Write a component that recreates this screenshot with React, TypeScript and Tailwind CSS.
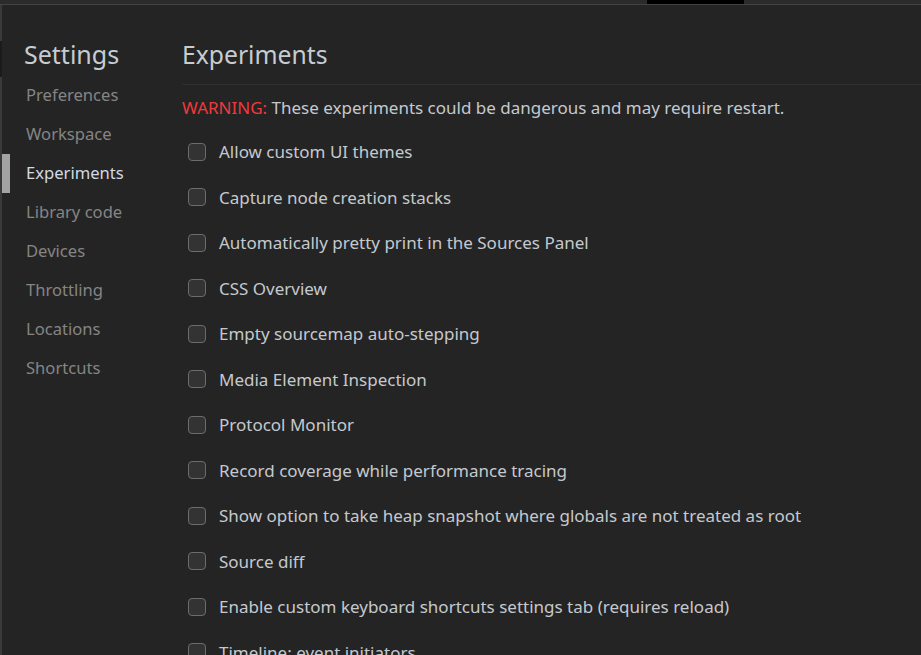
import React from 'react';

const navItems = [
  'Preferences',
  'Workspace',
  'Experiments',
  'Library code',
  'Devices',
  'Throttling',
  'Locations',
  'Shortcuts',
];

const experiments = [
  'Allow custom UI themes',
  'Capture node creation stacks',
  'Automatically pretty print in the Sources Panel',
  'CSS Overview',
  'Empty sourcemap auto-stepping',
  'Media Element Inspection',
  'Protocol Monitor',
  'Record coverage while performance tracing',
  'Show option to take heap snapshot where globals are not treated as root',
  'Source diff',
  'Enable custom keyboard shortcuts settings tab (requires reload)',
  'Timeline: event initiators',
];

export default function App() {
  const active = 'Experiments';

  return (
    <div
      className="h-[655px] w-[921px] overflow-hidden bg-[#242424] flex flex-col"
      style={{ fontFamily: '"Noto Sans", "Open Sans", sans-serif' }}
    >
      {/* strip of the window behind */}
      <div className="h-[4px] flex bg-[#2b2b2d] shrink-0">
        <div className="w-[647px]" />
        <div className="w-[97px] bg-black" />
      </div>
      <div className="h-px bg-[#434343] shrink-0" />

      <div className="flex flex-1 min-h-0">
        {/* left edge of the page behind */}
        <div className="w-[2px] flex flex-col shrink-0">
          <div className="h-[36px] bg-[#3a3a3a]" />
          <div className="h-[36px] bg-[#1b1b1b]" />
          <div className="flex-1 bg-[#3a3a3a]" />
        </div>

        {/* Settings sidebar */}
        <div className="w-[180px] shrink-0 flex flex-col">
          <h1 className="shrink-0 pl-[22px] pt-[32px] h-[71px] text-[25px] leading-[34px] text-[#c7ccd1]">Settings</h1>
          <nav className="flex flex-col shrink-0">
            {navItems.map(item => (
              <div key={item} className="relative h-[39px] flex items-center pl-[24px]">
                {item === active && (
                  <span className="absolute left-0 top-0 h-[39px] w-[8px] bg-[#a3a3a3]" />
                )}
                <span
                  className={`text-[16.6px] ${item === active ? 'text-[#d3dae1]' : 'text-[#858585]'}`}
                >
                  {item}
                </span>
              </div>
            ))}
          </nav>
        </div>

        {/* Panel */}
        <div className="flex-1 min-w-0 flex flex-col">
          <h2 className="shrink-0 pt-[34px] h-[80px] text-[24.7px] leading-[32px] text-[#c7ccd1] border-b border-[#2f2f2f]">
            Experiments
          </h2>
          <p className="shrink-0 mt-[11px] text-[17px] leading-[24px] text-[#c4c9cf] whitespace-nowrap">
            <span className="text-[#f0393c]">WARNING:</span> These experiments could be dangerous and may require restart.
          </p>
          <div className="flex flex-col shrink-0 mt-[9px]">
            {experiments.map(label => (
              <label key={label} className="shrink-0 h-[45.5px] flex items-center gap-[13px] pl-[6px] whitespace-nowrap">
                <span className="w-[18px] h-[18px] rounded-[4px] border border-[#6c6c6c] bg-[#333333] shrink-0" />
                <span className="text-[17px] text-[#c4c9cf]">{label}</span>
              </label>
            ))}
          </div>
        </div>
      </div>
    </div>
  );
}
